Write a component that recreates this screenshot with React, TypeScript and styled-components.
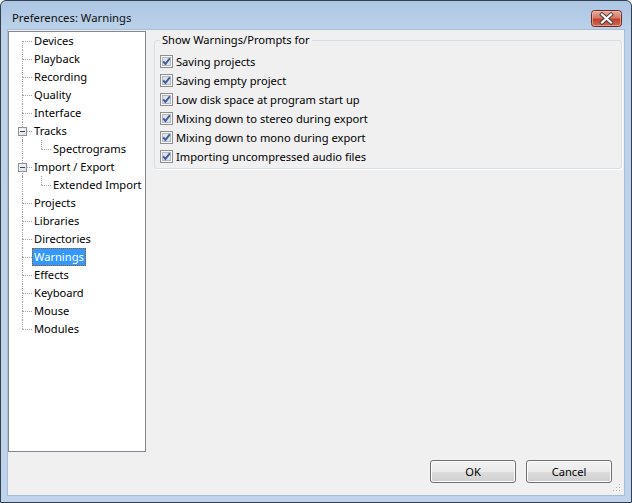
import React from 'react';
import styled, { createGlobalStyle } from 'styled-components';

const FONT = `"Noto Sans", "Liberation Sans", sans-serif`;
const SIZE = '11.15px';

const Global = createGlobalStyle`
  html, body { margin: 0; padding: 0; background: #ffffff; overflow: hidden; }
  * { box-sizing: border-box; }
`;

const Window = styled.div`
  width: 632px;
  height: 503px;
  border: 1px solid #33404e;
  border-radius: 6px 6px 0 0;
  background: linear-gradient(#adc6e3, #bcd2ea 30px, #bfd4ec);
  display: flex;
  flex-direction: column;
  font-family: ${FONT};
  font-size: ${SIZE};
  color: #000;
`;

const TitleBar = styled.div`
  height: 29px;
  flex: none;
  display: flex;
  align-items: flex-start;
`;

const TitleText = styled.div`
  margin: 9px 0 0 11px;
  line-height: 16px;
  font-size: 11.3px;
  color: #111;
`;

const CloseButton = styled.div`
  margin: 9px 9px 0 auto;
  width: 31px;
  height: 17px;
  display: flex;
`;

const Client = styled.div`
  flex: 1;
  margin: 0 7px 7px 7px;
  background: #f0f0f0;
  display: flex;
  flex-direction: column;
  position: relative;
  box-shadow: 0 0 0 1px #a7bdd6;
`;

const TopRow = styled.div`
  flex: 1;
  display: flex;
  align-items: flex-start;
  padding-top: 1px;
`;

const Tree = styled.div`
  width: 138px;
  height: 421px;
  flex: none;
  border: 1px solid #828790;
  background: #ffffff;
  display: flex;
  flex-direction: column;
`;

const TreeRow = styled.div<{ $level: number }>`
  height: 18px;
  display: flex;
  align-items: stretch;
  padding-left: 13px;
`;

const LINE = '1px dotted #a0a0a0';

const ParentLine = styled.span`
  width: 19px;
  flex: none;
  border-left: ${LINE};
`;

const Gutter = styled.span`
  width: 10px;
  flex: none;
  display: flex;
  flex-direction: column;
  position: relative;
`;

const HalfUp = styled.span<{ $on: boolean }>`
  height: 9px;
  border-left: ${(p) => (p.$on ? LINE : '1px solid transparent')};
`;

const HalfDown = styled.span<{ $on: boolean }>`
  height: 9px;
  border-left: ${(p) => (p.$on ? LINE : '1px solid transparent')};
  border-top: ${LINE};
`;

const Expander = styled.span`
  position: absolute;
  left: -4px;
  top: 5px;
  width: 9px;
  height: 9px;
  display: flex;
`;

const ItemLabel = styled.span<{ $selected: boolean }>`
  height: 18px;
  line-height: 16px;
  padding: 0 1px;
  white-space: nowrap;
  border: 1px dotted ${(p) => (p.$selected ? '#a05a10' : 'transparent')};
  background: ${(p) => (p.$selected ? '#3399ff' : 'transparent')};
  color: ${(p) => (p.$selected ? '#ffffff' : '#000000')};
`;

const Content = styled.div`
  flex: 1;
  margin: 0 2px 0 8px;
  padding-top: 1px;
`;

const Group = styled.fieldset`
  margin: 0;
  min-width: 0;
  padding: 4px 0 2px 5px;
  border: 1px solid #d5dfe5;
  border-radius: 3px;
  box-shadow: 1px 1px 0 #ffffff;
`;

const Legend = styled.legend`
  padding: 0 2px;
  line-height: 16px;
  color: #000;
`;

const CheckRow = styled.div`
  height: 19px;
  display: flex;
  align-items: center;
  gap: 3px;
  white-space: nowrap;
`;

const ButtonRow = styled.div`
  flex: none;
  display: flex;
  justify-content: flex-end;
  gap: 10px;
  padding: 8px 12px 12px 0;
`;

const Button = styled.button`
  width: 86px;
  height: 23px;
  padding: 0;
  font-family: ${FONT};
  font-size: ${SIZE};
  color: #000;
  border: 1px solid #707070;
  border-radius: 3px;
  background: linear-gradient(#f2f2f2 0%, #ebebeb 50%, #dddddd 51%, #cfcfcf 100%);
  box-shadow: inset 0 0 0 1px #fcfcfc;
`;

const Grip = styled.div`
  position: absolute;
  right: 2px;
  bottom: 2px;
  width: 10px;
  height: 10px;
  display: flex;
`;

type Item = {
  label: string;
  level: 1 | 2;
  expander?: boolean;
  selected?: boolean;
};

const items: Item[] = [
  { label: 'Devices', level: 1 },
  { label: 'Playback', level: 1 },
  { label: 'Recording', level: 1 },
  { label: 'Quality', level: 1 },
  { label: 'Interface', level: 1 },
  { label: 'Tracks', level: 1, expander: true },
  { label: 'Spectrograms', level: 2 },
  { label: 'Import / Export', level: 1, expander: true },
  { label: 'Extended Import', level: 2 },
  { label: 'Projects', level: 1 },
  { label: 'Libraries', level: 1 },
  { label: 'Directories', level: 1 },
  { label: 'Warnings', level: 1, selected: true },
  { label: 'Effects', level: 1 },
  { label: 'Keyboard', level: 1 },
  { label: 'Mouse', level: 1 },
  { label: 'Modules', level: 1 },
];

const warnings = [
  'Saving projects',
  'Saving empty project',
  'Low disk space at program start up',
  'Mixing down to stereo during export',
  'Mixing down to mono during export',
  'Importing uncompressed audio files',
];

const CloseIcon = () => (
  <svg width="31" height="17" viewBox="0 0 31 17">
    <defs>
      <linearGradient id="cg" x1="0" y1="0" x2="0" y2="1">
        <stop offset="0" stopColor="#eab1a5" />
        <stop offset="0.45" stopColor="#d47a68" />
        <stop offset="0.55" stopColor="#c2412c" />
        <stop offset="1" stopColor="#d26a4f" />
      </linearGradient>
    </defs>
    <rect x="0.5" y="0.5" width="30" height="16" rx="3" fill="url(#cg)" stroke="#6e2a22" />
    <rect x="1.5" y="1.5" width="28" height="14" rx="2" fill="none" stroke="#f3c3b7" strokeOpacity="0.6" />
    <path d="M11 4.5 L20 12.5 M20 4.5 L11 12.5" stroke="#4a3a3a" strokeWidth="4" strokeLinecap="square" />
    <path d="M11 4.5 L20 12.5 M20 4.5 L11 12.5" stroke="#ffffff" strokeWidth="2.2" strokeLinecap="square" />
  </svg>
);

const MinusBox = () => (
  <svg width="9" height="9" viewBox="0 0 9 9">
    <defs>
      <linearGradient id="mg" x1="0" y1="0" x2="1" y2="1">
        <stop offset="0" stopColor="#ffffff" />
        <stop offset="1" stopColor="#dcdcdc" />
      </linearGradient>
    </defs>
    <rect x="0.5" y="0.5" width="8" height="8" fill="url(#mg)" stroke="#919191" />
    <rect x="2" y="4" width="5" height="1" fill="#2b4a78" />
  </svg>
);

const CheckBox = () => (
  <svg width="13" height="13" viewBox="0 0 13 13" style={{ flex: 'none' }}>
    <rect x="0.5" y="0.5" width="12" height="12" fill="#f6f6f6" stroke="#8f8f8f" />
    <rect x="2.5" y="2.5" width="8" height="8" fill="#dfe3e8" stroke="#b4b9bf" />
    <path d="M3.2 6.4 L5.4 8.9 L9.8 3.4" fill="none" stroke="#3f5d9b" strokeWidth="1.9" />
  </svg>
);

const GripIcon = () => (
  <svg width="10" height="10" viewBox="0 0 10 10">
    {[
      [7, 1],
      [4, 4],
      [7, 4],
      [1, 7],
      [4, 7],
      [7, 7],
    ].map(([x, y]) => (
      <g key={`${x}-${y}`}>
        <rect x={x + 1} y={y + 1} width="1" height="1" fill="#ffffff" />
        <rect x={x} y={y} width="1" height="1" fill="#b0b0b0" />
      </g>
    ))}
  </svg>
);

const topLevel = items.filter((i) => i.level === 1);

export default function App() {
  return (
    <>
      <Global />
      <Window>
        <TitleBar>
          <TitleText>Preferences: Warnings</TitleText>
          <CloseButton>
            <CloseIcon />
          </CloseButton>
        </TitleBar>
        <Client>
          <TopRow>
            <Tree>
              {items.map((it) => {
                if (it.level === 2) {
                  return (
                    <TreeRow key={it.label} $level={2}>
                      <ParentLine />
                      <Gutter>
                        <HalfUp $on />
                        <HalfDown $on={false} />
                      </Gutter>
                      <ItemLabel $selected={false}>{it.label}</ItemLabel>
                    </TreeRow>
                  );
                }
                const idx = topLevel.indexOf(it);
                const first = idx === 0;
                const last = idx === topLevel.length - 1;
                return (
                  <TreeRow key={it.label} $level={1}>
                    <Gutter>
                      <HalfUp $on={!first} />
                      <HalfDown $on={!last} />
                      {it.expander && (
                        <Expander>
                          <MinusBox />
                        </Expander>
                      )}
                    </Gutter>
                    <ItemLabel $selected={!!it.selected}>{it.label}</ItemLabel>
                  </TreeRow>
                );
              })}
            </Tree>
            <Content>
              <Group>
                <Legend>Show Warnings/Prompts for</Legend>
                {warnings.map((w) => (
                  <CheckRow key={w}>
                    <CheckBox />
                    <span>{w}</span>
                  </CheckRow>
                ))}
              </Group>
            </Content>
          </TopRow>
          <ButtonRow>
            <Button>OK</Button>
            <Button>Cancel</Button>
          </ButtonRow>
          <Grip>
            <GripIcon />
          </Grip>
        </Client>
      </Window>
    </>
  );
}
